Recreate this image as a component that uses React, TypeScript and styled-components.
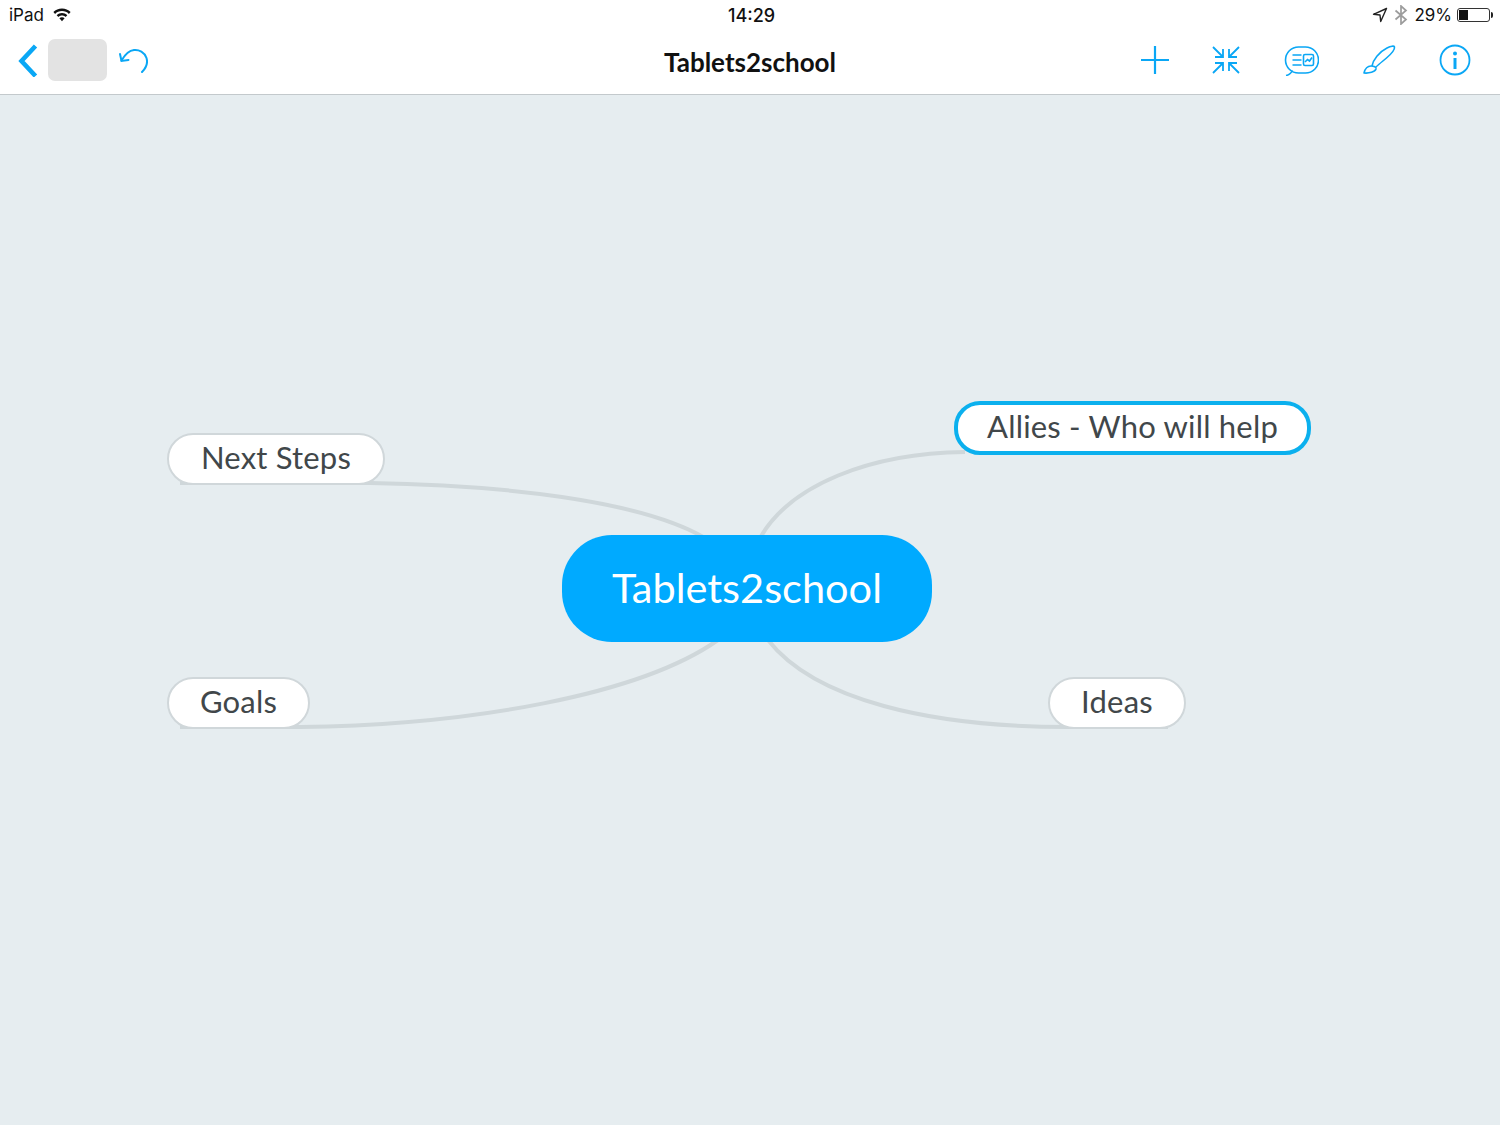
import { createGlobalStyle, styled } from 'styled-components'

const GlobalStyle = createGlobalStyle`
    html, body {
        margin: 0;
        padding: 0;
        background: #e6edf0;
    }
`

interface NodeProps {
    $left: number;
    $top: number;
    $width: number;
}

function App() {
    return (
        <Screen>
            <GlobalStyle />
            <Header>
                <StatusBar>
                    <StatusSide>
                        <StatusText>iPad</StatusText>
                        <WifiIcon />
                    </StatusSide>
                    <Clock>14:29</Clock>
                    <StatusRight>
                        <LocationIcon />
                        <BluetoothIcon />
                        <StatusText>29%</StatusText>
                        <Battery><BatteryLevel /></Battery>
                    </StatusRight>
                </StatusBar>
                <Toolbar>
                    <ToolGroup>
                        <BackIcon />
                        <Thumb />
                        <UndoIcon />
                    </ToolGroup>
                    <Title>Tablets2school</Title>
                    <ActionGroup>
                        <PlusIcon />
                        <CollapseIcon />
                        <CommentIcon />
                        <BrushIcon />
                        <InfoIcon />
                    </ActionGroup>
                </Toolbar>
            </Header>
            <Canvas>
                <Lines viewBox="0 0 1500 1030" width="1500" height="1030" fill="none">
                    <path d="M180 388 L370 388 C500 390 640 405 705 443" />
                    <path d="M180 632 L300 632 C470 630 640 600 718 545" />
                    <path d="M760 443 C790 390 870 358 965 357" />
                    <path d="M768 545 C815 605 930 632 1068 632 L1168 632" />
                </Lines>
                <Topic $left={167} $top={338} $width={218}>Next Steps</Topic>
                <Topic $left={167} $top={582} $width={143}>Goals</Topic>
                <Topic $left={1048} $top={582} $width={138}>Ideas</Topic>
                <SelectedTopic $left={954} $top={306} $width={357}>Allies - Who will help</SelectedTopic>
                <CentralTopic>Tablets2school</CentralTopic>
            </Canvas>
        </Screen>
    )
}

export default App

function WifiIcon() {
    return (
        <svg width="18" height="14" viewBox="0 0 18 14" fill="#111">
            <path d="M9 .6C5.600 .6 2.600 1.900.4 4.100l1.700 1.800C3.900 4.100 6.300 3.100 9 3.100s5.100 1 6.900 2.800l1.700-1.800C15.400 1.900 12.400 .6 9 .6z" />
            <path d="M9 5c-2 0-3.900.8-5.300 2.200l1.700 1.800C6.300 8 7.600 7.500 9 7.500s2.700.5 3.600 1.500l1.700-1.800C12.900 5.800 11 5 9 5z" />
            <path d="M9 9.200c-1 0-1.900.4-2.600 1.100L9 13.200l2.600-2.900C10.900 9.600 10 9.200 9 9.200z" />
        </svg>
    )
}

function LocationIcon() {
    return (
        <svg width="16" height="16" viewBox="0 0 16 16" fill="none" stroke="#222" strokeWidth="1.400" strokeLinejoin="round">
            <path d="M14.500 1.500 L1.500 7.300 L8 8 L8.700 14.500 Z" />
        </svg>
    )
}

function BluetoothIcon() {
    return (
        <svg width="14" height="20" viewBox="0 0 14 20" fill="none" stroke="#9c9c9c" strokeWidth="1.700">
            <path d="M1.500 5.500 L12 14.500 L7 19 V1 L12 5.500 L1.500 14.500" />
        </svg>
    )
}

function BackIcon() {
    return (
        <svg width="20" height="34" viewBox="0 -1 20 34" fill="none" stroke="#0aa7f5" strokeWidth="4.600">
            <path d="M17.500 2 L3.500 17 L17.500 32" />
        </svg>
    )
}

function UndoIcon() {
    return (
        <svg width="30" height="26" viewBox="0 0 30 26" fill="none" stroke="#0aa7f5" strokeWidth="2" strokeLinecap="round">
            <path d="M24 25 C28 21 30 16 28.500 11 C26.500 5 21 2.500 16 3 C11 3.500 7 7.500 3.500 13.500" />
            <path d="M2 7 L3.500 14 L10.500 13" />
        </svg>
    )
}

function PlusIcon() {
    return (
        <svg width="28" height="28" viewBox="0 0 28 28" stroke="#0aa7f5" strokeWidth="2.200">
            <path d="M14 0 V28 M0 14 H28" />
        </svg>
    )
}

function CollapseIcon() {
    return (
        <svg width="28" height="28" viewBox="0 0 28 28" fill="none" stroke="#0aa7f5" strokeWidth="1.800">
            <path d="M1 1 L11 11 M3 11 H11 V3" />
            <path d="M27 1 L17 11 M25 11 H17 V3" />
            <path d="M1 27 L11 17 M3 17 H11 V25" />
            <path d="M27 27 L17 17 M25 17 H17 V25" />
        </svg>
    )
}

function CommentIcon() {
    return (
        <svg width="36" height="32" viewBox="-1 0 36 32" fill="none" stroke="#0aa7f5" strokeWidth="1.600">
            <rect x="1.500" y="3" width="33" height="26" rx="13" />
            <path d="M8.500 26.500 C7 29.500 5 31 2 31.500" />
            <path d="M8.500 11 H17.500 M8.500 16 H17.500 M8.500 21 H17.500" />
            <rect x="19.500" y="10.500" width="10" height="11" rx="1.500" />
            <path d="M21 18 L23.500 15.500 L25.500 17 L28 13.500" />
        </svg>
    )
}

function BrushIcon() {
    return (
        <svg width="34" height="32" viewBox="-1 0 34 32" fill="none" stroke="#0aa7f5" strokeWidth="1.600" strokeLinejoin="round">
            <path d="M9 22 C10 16 16 8 24 4 C28 2 31 1.500 31.500 3 C32 6 27 11 23.500 14 C20 17 16 20 13 23" />
            <path d="M1 29 C2 25 4 22 8 22 C11 22 13.500 23 13 25 C12 28 6 29.500 1 29 Z" />
        </svg>
    )
}

function InfoIcon() {
    return (
        <svg width="32" height="32" viewBox="0 0 32 32" fill="none" stroke="#0aa7f5" strokeWidth="1.800">
            <circle cx="16" cy="16" r="14.500" />
            <path d="M16 14 V25" strokeWidth="3" />
            <circle cx="16" cy="9.500" r="2" fill="#0aa7f5" stroke="none" />
        </svg>
    )
}

const Screen = styled.div`
    width: 1500px;
    height: 1125px;
    display: flex;
    flex-direction: column;
    overflow: hidden;
    font-family: "Lato", "Open Sans", sans-serif;
    background-color: #e6edf0;
`

const Header = styled.header`
    height: 94px;
    flex-shrink: 0;
    display: flex;
    flex-direction: column;
    background-color: #ffffff;
    border-bottom: 1px solid #c3c9cc;
`

const StatusBar = styled.div`
    height: 30px;
    padding: 0 10px 0 9px;
    display: grid;
    grid-template-columns: 1fr auto 1fr;
    align-items: center;
    font-family: "Inter", "Liberation Sans", sans-serif;
    color: #111111;
`

const StatusSide = styled.div`
    display: flex;
    align-items: center;
    gap: 9px;
`

const StatusRight = styled(StatusSide)`
    justify-content: flex-end;
    gap: 6px;
`

const StatusText = styled.span`
    font-size: 17px;
`

const Clock = styled.span`
    font-size: 18px;
    font-weight: 500;
    margin-left: 4px;
`

const Battery = styled.div`
    position: relative;
    width: 33px;
    height: 14px;
    margin-left: -1px;
    box-sizing: border-box;
    padding: 1px;
    border: 1px solid #333333;
    border-radius: 3px;

    &::after {
        content: "";
        position: absolute;
        right: -4px;
        top: 3px;
        width: 2px;
        height: 6px;
        background-color: #222222;
        border-radius: 0 2px 2px 0;
    }
`

const BatteryLevel = styled.div`
    width: 9px;
    height: 100%;
    background-color: #111111;
`

const Toolbar = styled.div`
    flex: 1;
    display: grid;
    grid-template-columns: 1fr auto 1fr;
    align-items: center;
    padding: 0 18px 4px;
`

const ToolGroup = styled.div`
    display: flex;
    align-items: center;
    gap: 11px;
`

const ActionGroup = styled.div`
    display: flex;
    align-items: center;
    justify-content: flex-end;
    gap: 43px;
    padding-right: 11px;
`

const Thumb = styled.div`
    width: 59px;
    height: 42px;
    margin-left: -1px;
    background-color: #e3e3e3;
    border-radius: 7px;
`

const Title = styled.h1`
    margin: 0;
    padding-top: 3px;
    font-size: 26px;
    font-weight: 700;
    color: #111111;
`

const Canvas = styled.main`
    position: relative;
    flex: 1;
`

const Lines = styled.svg`
    position: absolute;
    left: 0;
    top: 0;
    stroke: #cfd7da;
    stroke-width: 4;
`

const Topic = styled.div<NodeProps>`
    position: absolute;
    left: ${p => p.$left}px;
    top: ${p => p.$top}px;
    width: ${p => p.$width}px;
    height: 52px;
    box-sizing: border-box;
    padding-bottom: 4px;
    display: flex;
    align-items: center;
    justify-content: center;
    background-color: #ffffff;
    border: 2px solid #d0d7da;
    border-radius: 26px;
    font-size: 31px;
    letter-spacing: 0.2px;
    color: #41474a;
    white-space: nowrap;
`

const SelectedTopic = styled(Topic)`
    height: 54px;
    border: 4px solid #0bb0ee;
`

const CentralTopic = styled.div`
    position: absolute;
    left: 562px;
    top: 440px;
    width: 370px;
    height: 107px;
    padding-bottom: 4px;
    box-sizing: border-box;
    display: flex;
    align-items: center;
    justify-content: center;
    background-color: #00aaff;
    border-radius: 50px;
    font-size: 41.500px;
    color: #ffffff;
    white-space: nowrap;
`
